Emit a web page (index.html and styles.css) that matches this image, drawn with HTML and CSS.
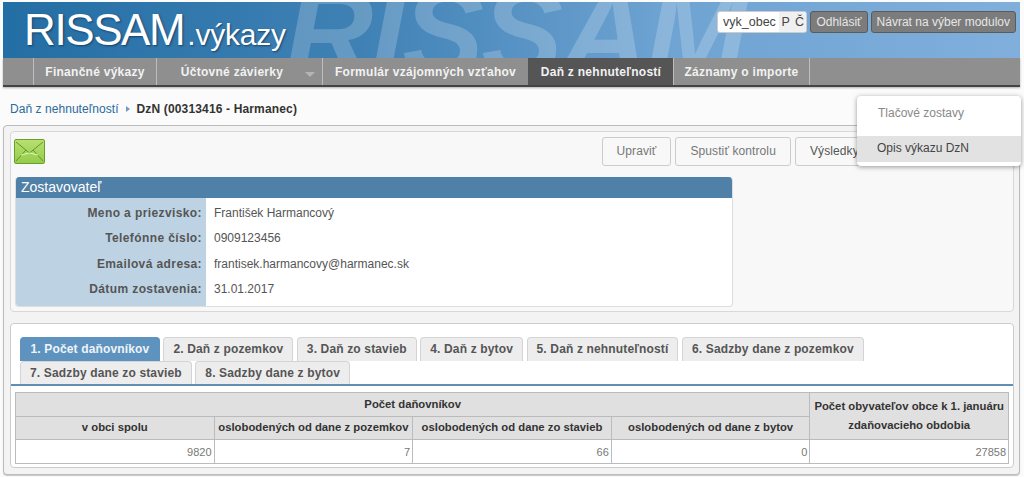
FILE: index.html
```html
<!DOCTYPE html>
<html lang="sk">
<head>
    <meta charset="UTF-8">
    <title>RISSAM.výkazy</title>
    <link rel="stylesheet" href="styles.css">
</head>
<body>
    <!-- Header -->
    <div class="header">
        <div class="watermark">RISSAM</div>
        <div class="logo">RISSAM<span class="logo-sub">.výkazy</span></div>
        <div class="user-box">
            <div class="user-name">
                <span class="user-login">vyk_obec</span>
                <span class="user-flag">P</span>
                <span class="user-flag">Č</span>
            </div>
            <div class="head-button">Odhlásiť</div>
            <div class="head-button">Návrat na výber modulov</div>
        </div>
    </div>

    <!-- Menu -->
    <div class="menu">
        <div class="menu-item item-fin">Finančné výkazy</div>
        <div class="menu-item item-uct">Účtovné závierky<span class="menu-arrow"></span></div>
        <div class="menu-item item-form">Formulár vzájomných vzťahov</div>
        <div class="menu-item item-dzn active">Daň z nehnuteľností</div>
        <div class="menu-item item-zaz">Záznamy o importe</div>
    </div>

    <!-- Breadcrumb -->
    <div class="breadcrumb">
        <span class="crumb-link">Daň z nehnuteľností</span>
        <span class="crumb-arrow"></span>
        <span class="crumb-current">DzN (00313416 - Harmanec)</span>
    </div>

    <div class="outer">
        <!-- Top panel -->
        <div class="panel panel-top">
            <div class="toolbar">
                <div class="mail-icon">
                    <svg width="29" height="22" viewBox="0 0 29 22">
                        <path d="M1 2 L14.5 13 L28 2 M1 21 L11 10 M28 21 L18 10" fill="none" stroke="#5f9a22" stroke-width="1"/>
                        <path d="M6 15 L14.5 13 L23 15" fill="none" stroke="#e4f5b8" stroke-width="1"/>
                    </svg>
                </div>
                <div class="actions">
                    <div class="action">Upraviť</div>
                    <div class="action">Spustiť kontrolu</div>
                    <div class="action action-strong">Výsledky kontroly</div>
                </div>
            </div>

            <div class="author-box">
                <div class="author-title">Zostavovateľ</div>
                <div class="author-row">
                    <div class="author-label">Meno a priezvisko:</div>
                    <div class="author-value">František Harmancový</div>
                </div>
                <div class="author-row">
                    <div class="author-label">Telefónne číslo:</div>
                    <div class="author-value">0909123456</div>
                </div>
                <div class="author-row">
                    <div class="author-label">Emailová adresa:</div>
                    <div class="author-value">frantisek.harmancovy@harmanec.sk</div>
                </div>
                <div class="author-row">
                    <div class="author-label">Dátum zostavenia:</div>
                    <div class="author-value">31.01.2017</div>
                </div>
            </div>
        </div>

        <!-- Tabs panel -->
        <div class="panel panel-tabs">
            <div class="tabs">
                <div class="tab active">1. Počet daňovníkov</div>
                <div class="tab">2. Daň z pozemkov</div>
                <div class="tab">3. Daň zo stavieb</div>
                <div class="tab">4. Daň z bytov</div>
                <div class="tab">5. Daň z nehnuteľností</div>
                <div class="tab">6. Sadzby dane z pozemkov</div>
                <div class="tab">7. Sadzby dane zo stavieb</div>
                <div class="tab">8. Sadzby dane z bytov</div>
            </div>

            <table class="data-table">
                <thead>
                    <tr>
                        <th colspan="4">Počet daňovníkov</th>
                        <th rowspan="2">Počet obyvateľov obce k 1. januáru<br>zdaňovacieho obdobia</th>
                    </tr>
                    <tr>
                        <th>v obci spolu</th>
                        <th>oslobodených od dane z pozemkov</th>
                        <th>oslobodených od dane zo stavieb</th>
                        <th>oslobodených od dane z bytov</th>
                    </tr>
                </thead>
                <tbody>
                    <tr>
                        <td>9820</td>
                        <td>7</td>
                        <td>66</td>
                        <td>0</td>
                        <td>27858</td>
                    </tr>
                </tbody>
            </table>
        </div>
    </div>

    <!-- Print menu -->
    <div class="dropdown">
        <div class="dropdown-head">Tlačové zostavy</div>
        <div class="dropdown-item">Opis výkazu DzN</div>
    </div>
</body>
</html>
```

FILE: styles.css
```css
/* Basic Styling */
html, body {
    height: 477px;
    overflow: hidden;
}

body {
    margin: 0;
    padding: 2px 4px 0 3px;
    box-sizing: border-box;
    font-family: "Liberation Sans", Arial, sans-serif;
    font-size: 12px;
    background-color: #fbfbfb;
    color: #555;
}

/* Header */
.header {
    position: relative;
    display: flex;
    justify-content: space-between;
    height: 56px;
    overflow: hidden;
    background: linear-gradient(90deg, #236ea4 0%, #3f81b5 35%, #6ea3d2 65%, #80afdc 100%);
}

.watermark {
    position: absolute;
    top: -34px;
    left: 282px;
    font-size: 122px;
    font-style: italic;
    font-weight: bold;
    line-height: 130px;
    letter-spacing: -2.3px;
    color: rgba(255, 255, 255, 0.2);
}

.logo {
    position: relative;
    padding: 3px 0 0 21px;
    font-size: 44px;
    line-height: 50px;
    letter-spacing: -1.4px;
    color: white;
    text-shadow: 1px 1px 2px rgba(0, 30, 60, 0.6);
}

.logo-sub {
    margin-left: 3px;
    font-size: 30px;
    letter-spacing: -0.2px;
}

.user-box {
    position: relative;
    display: flex;
    gap: 3px;
    align-items: flex-start;
    padding: 9px 4px 0 0;
}

.user-name {
    display: flex;
    align-items: center;
    height: 22px;
    box-sizing: border-box;
    padding-left: 5px;
    overflow: hidden;
    border: 1px solid #ccc;
    border-radius: 3px;
    background-color: white;
    font-size: 12.5px;
    color: #444;
}

.user-login {
    width: 56px;
    overflow: hidden;
}

.user-flag {
    padding: 0 2.5px;
    line-height: 20px;
    background-color: #f0f0f0;
}

.head-button {
    height: 22px;
    box-sizing: border-box;
    padding: 0 5px;
    border: 1px solid #5b5b5b;
    border-radius: 3px;
    background-color: #7c7c7c;
    color: #e6e6e6;
    line-height: 20px;
}

/* Menu */
.menu {
    display: flex;
    height: 29px;
    box-sizing: border-box;
    padding-left: 30px;
    background-color: #8f8f8f;
    border-bottom: 2px solid #444;
    box-shadow: 0 1px 2px rgba(0, 0, 0, 0.3);
}

.menu-item {
    position: relative;
    box-sizing: border-box;
    height: 27px;
    border-left: 1px solid #bdbdbd;
    text-align: center;
    font-weight: bold;
    line-height: 29px;
    letter-spacing: 0.27px;
    color: #f2f2f2;
}

.item-fin { width: 123px; }
.item-uct { width: 166px; padding-right: 15px; }
.item-form { width: 206px; }
.item-dzn { width: 145px; }
.item-zaz { width: 137px; border-right: 1px solid #bdbdbd; }

.menu-item.active {
    background-color: #555;
    border-left-color: #555;
}

.menu-arrow {
    position: absolute;
    top: 14px;
    right: 7px;
    border: 5px solid transparent;
    border-top-color: #b5b5b5;
    border-bottom-width: 0;
}

/* Breadcrumb */
.breadcrumb {
    display: flex;
    align-items: center;
    height: 38px;
    padding: 5px 0 0 7px;
    box-sizing: border-box;
    font-size: 12px;
}

.crumb-link {
    letter-spacing: 0.05px;
    color: #2a6a9c;
}

.crumb-arrow {
    margin: 0 7px;
    border: 3px solid transparent;
    border-left: 4px solid #6f9cc0;
    border-right-width: 0;
}

.crumb-current {
    font-weight: bold;
    letter-spacing: 0.15px;
    color: #333;
}

/* Panels */
.outer {
    height: 350px;
    box-sizing: border-box;
    padding: 5px 5px 0 6px;
    border: 1px solid #bbb;
    border-radius: 4px;
    background-color: #f3f3f3;
    box-shadow: 0 1px 1px rgba(0, 0, 0, 0.2);
}

.panel {
    border: 1px solid #d8d8d8;
    border-radius: 4px;
}

.panel-top {
    height: 181px;
    box-sizing: border-box;
    padding: 0 0 0 4px;
    margin-bottom: 11px;
    background-color: #f8f8f8;
}

.toolbar {
    display: flex;
    justify-content: space-between;
    height: 45px;
}

.mail-icon {
    box-sizing: border-box;
    width: 31px;
    height: 25px;
    margin-top: 7px;
    margin-left: -1px;
    border: 1px solid #6b9f2c;
    border-radius: 2px;
    background: linear-gradient(180deg, #b8e070, #94cc4c);
}

.mail-icon svg {
    display: block;
}

.actions {
    display: flex;
    gap: 4px;
    padding-top: 5px;
    margin-right: 93px;
}

.action {
    height: 29px;
    box-sizing: border-box;
    padding: 0 14px;
    border: 1px solid #ccc;
    border-radius: 3px;
    background-color: #f8f8f8;
    line-height: 27px;
    letter-spacing: 0.1px;
    color: #777;
}

.action-strong {
    color: #555;
}

.author-box {
    width: 716px;
    border: 1px solid #ddd;
    border-top: none;
    border-radius: 4px;
    overflow: hidden;
    background-color: white;
}

.author-title {
    height: 21px;
    padding-left: 5px;
    background-color: #4f80a8;
    color: white;
    font-size: 14px;
    line-height: 20px;
}

.author-row {
    display: flex;
    height: 25.6px;
    line-height: 25px;
}

.author-row:nth-child(2) {
    height: 28.1px;
}

.author-row:nth-child(2) > div {
    padding-top: 2.5px;
}

.author-row:last-child {
    height: 28.6px;
}

.author-label {
    width: 186px;
    padding-right: 4px;
    background-color: #bdd3e4;
    text-align: right;
    font-weight: bold;
    letter-spacing: 0.4px;
}

.author-value {
    padding-left: 8px;
}

.panel-tabs {
    height: 145px;
    box-sizing: border-box;
    padding: 13px 0 0;
    background-color: white;
    border-color: #ccc;
}

/* Tabs */
.tabs {
    display: flex;
    flex-wrap: wrap;
    gap: 0 3.5px;
    padding-left: 9px;
    padding-right: 130px;
    border-bottom: 2px solid #5f8fb5;
}

.tab {
    height: 23.5px;
    box-sizing: border-box;
    padding: 0 9px;
    border: 1px solid #d4d4d4;
    border-bottom: none;
    border-radius: 4px 4px 0 0;
    background-color: #ededed;
    font-weight: bold;
    line-height: 23px;
    letter-spacing: 0.15px;
    color: #555;
}

.tab.active {
    padding: 0 9.5px;
    border-color: #5f93bf;
    background-color: #5f93bf;
    color: #eef4f9;
}

/* Table */
.data-table {
    width: 994px;
    margin: 6px 0 0 4px;
    table-layout: fixed;
    border-collapse: collapse;
}

.data-table th {
    height: 22.67px;
    padding: 0;
    border: 1px solid #bbb;
    background-color: #e0e0e0;
    font-size: 11.3px;
    line-height: 19px;
    white-space: nowrap;
    color: #333;
}

.data-table td {
    height: 22.67px;
    padding: 0 2px;
    border: 1px solid #bbb;
    background-color: white;
    text-align: right;
    font-size: 11px;
    color: #777;
}

/* Dropdown */
.dropdown {
    position: absolute;
    top: 96px;
    left: 857px;
    width: 164px;
    height: 70px;
    overflow: hidden;
    border-radius: 4px;
    background-color: white;
    box-shadow: 0 1px 5px rgba(0, 0, 0, 0.4);
}

.dropdown-head {
    height: 40px;
    padding-left: 21px;
    line-height: 34px;
    color: #888;
}

.dropdown-item {
    height: 26px;
    padding-left: 20px;
    background-color: #e2e2e2;
    line-height: 25px;
    color: #444;
}
```
